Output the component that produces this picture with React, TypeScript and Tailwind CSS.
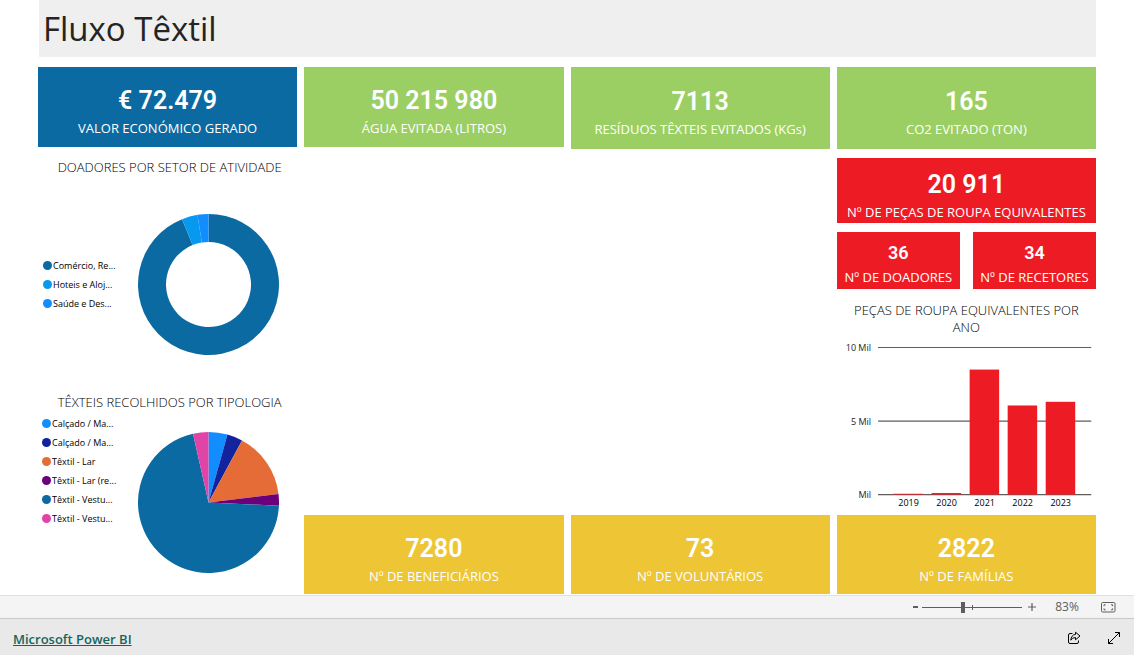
import { useState } from "react";

interface Slice {
  label: string;
  color: string;
  start: number;
  end: number;
}

interface StatCardProps {
  value: string;
  label: string;
  className: string;
  small?: boolean;
}

const FONT = "font-['Open_Sans','Noto_Sans',sans-serif]";

// Angles in degrees, clockwise from the top
const donors: Slice[] = [
  { label: "Comércio, Re...", color: "#0B6AA2", start: 0, end: 338 },
  { label: "Hoteis e Aloj...", color: "#0799F0", start: 338, end: 351 },
  { label: "Saúde e Des...", color: "#118DFF", start: 351, end: 360 },
];

const textiles: Slice[] = [
  { label: "Calçado / Ma...", color: "#118DFF", start: 0, end: 15.6 },
  { label: "Calçado / Ma...", color: "#12239E", start: 15.6, end: 28.4 },
  { label: "Têxtil - Lar", color: "#E66C37", start: 28.4, end: 83 },
  { label: "Têxtil - Lar (re...", color: "#6B007B", start: 83, end: 92.6 },
  { label: "Têxtil - Vestu...", color: "#0B6AA2", start: 92.6, end: 347.3 },
  { label: "Têxtil - Vestu...", color: "#E044A7", start: 347.3, end: 360 },
];

const years = [
  { year: "2019", pieces: 60 },
  { year: "2020", pieces: 110 },
  { year: "2021", pieces: 8500 },
  { year: "2022", pieces: 6060 },
  { year: "2023", pieces: 6310 },
];

function point(r: number, angle: number) {
  const a = (angle * Math.PI) / 180;
  return `${70.5 + r * Math.sin(a)} ${70.5 - r * Math.cos(a)}`;
}

function slicePath({ start, end }: Slice, inner: number) {
  const large = end - start > 180 ? 1 : 0;
  return `M${point(70.5, start)} A70.5 70.5 0 ${large} 1 ${point(70.5, end)} L${point(inner, end)} A${inner} ${inner} 0 ${large} 0 ${point(inner, start)} Z`;
}

function RoundChart({ title, slices, inner }: { title: string; slices: Slice[]; inner: number }) {
  return (
    <svg viewBox="0 0 141 141" className="size-[141px] shrink-0" role="img" aria-label={title}>
      {slices.map((slice) => (
        <path key={slice.start} d={slicePath(slice, inner)} fill={slice.color} />
      ))}
    </svg>
  );
}

function Legend({ slices }: { slices: Slice[] }) {
  return (
    <ul className="w-[95px] shrink-0">
      {slices.map((slice) => (
        <li key={slice.start} className="flex h-[19px] items-center gap-px whitespace-nowrap text-[9px] text-black">
          <span className="size-[9px] rounded-full" style={{ backgroundColor: slice.color }} />
          {slice.label}
        </li>
      ))}
    </ul>
  );
}

function StatCard({ value, label, className, small }: StatCardProps) {
  return (
    <div
      className={`flex flex-col items-center justify-center text-white ${small ? "gap-0.5 pt-1.5" : "gap-px pt-[9px]"} ${className}`}
    >
      <span
        className={`font-['Roboto',sans-serif] font-semibold ${small ? "text-[18px] leading-6" : "text-[25px] leading-8"}`}
      >
        {value}
      </span>
      <span className="whitespace-nowrap text-[13px] leading-5">{label}</span>
    </div>
  );
}

function YearChart() {
  return (
    <svg viewBox="0 0 259 174" className="mt-0.5 w-full" role="img" aria-label="Peças de roupa equivalentes por ano">
      {["10 Mil", "5 Mil", "Mil"].map((tick, i) => (
        <g key={tick}>
          <line x1="41" x2="254" y1={9.5 + i * 73.5} y2={9.5 + i * 73.5} stroke="#605E5C" strokeWidth="1.2" />
          <text x="34" y={13 + i * 73.5} textAnchor="end" fontSize="9" fill="#252423">
            {tick}
          </text>
        </g>
      ))}
      {years.map(({ year, pieces }, i) => {
        const height = pieces * 0.0147;
        return (
          <g key={year}>
            <rect x={56.5 + i * 38} y={156.5 - height} width="29.5" height={height} fill="#ED1C24" />
            <text x={71.5 + i * 38} y="168" textAnchor="middle" fontSize="9" fill="#000">
              {year}
            </text>
          </g>
        );
      })}
    </svg>
  );
}

export default function App() {
  const [zoom, setZoom] = useState(83);

  return (
    <div className={`flex min-h-screen flex-col bg-white ${FONT}`}>
      <main className="flex grow flex-col px-[38px]">
        <header className="ml-px flex h-[57px] items-center bg-[#EFEFEF] px-1">
          <h1 className="text-[33px] leading-10 text-[#252423]">Fluxo Têxtil</h1>
        </header>

        <div className="grid grow grid-cols-4 gap-[7px] pt-2.5 pb-px">
          {/* Donors and textile types */}
          <div className="flex flex-col">
            <StatCard value="€ 72.479" label="VALOR ECONÓMICO GERADO" className="h-20 bg-[#0B6AA2]" />
            <section>
              <h2 className="mt-2.5 pl-1 text-center text-[13px] leading-5 font-light text-black">
                DOADORES POR SETOR DE ATIVIDADE
              </h2>
              <div className="mt-[37px] flex items-center pl-[5px]">
                <Legend slices={donors} />
                <RoundChart title="Doadores por setor de atividade" slices={donors} inner={42.5} />
              </div>
            </section>
            <section>
              <h2 className="mt-[37px] pl-1 text-center text-[13px] leading-5 font-light text-black">
                TÊXTEIS RECOLHIDOS POR TIPOLOGIA
              </h2>
              <div className="mt-0.5 flex items-start pl-1">
                <Legend slices={textiles} />
                <div className="pt-[18px] pl-px">
                  <RoundChart title="Têxteis recolhidos por tipologia" slices={textiles} inner={0} />
                </div>
              </div>
            </section>
          </div>

          <div className="flex flex-col justify-between">
            <StatCard value="50 215 980" label="ÁGUA EVITADA (LITROS)" className="h-20 bg-[#9BCF63]" />
            <StatCard value="7280" label="Nº DE BENEFICIÁRIOS" className="h-[79px] bg-[#EDC535]" />
          </div>

          <div className="flex flex-col justify-between">
            <StatCard value="7113" label="RESÍDUOS TÊXTEIS EVITADOS (KGs)" className="h-[82px] bg-[#9BCF63]" />
            <StatCard value="73" label="Nº DE VOLUNTÁRIOS" className="h-[79px] bg-[#EDC535]" />
          </div>

          <div className="flex flex-col">
            <StatCard value="165" label="CO2 EVITADO (TON)" className="h-[82px] bg-[#9BCF63]" />
            <StatCard
              value="20 911"
              label="Nº DE PEÇAS DE ROUPA EQUIVALENTES"
              className="mt-[9px] h-[65px] bg-[#ED1C24]"
            />
            <div className="mt-[9px] grid grid-cols-2 gap-[13px]">
              <StatCard small value="36" label="Nº DE DOADORES" className="h-[57px] bg-[#ED1C24]" />
              <StatCard small value="34" label="Nº DE RECETORES" className="h-[57px] bg-[#ED1C24]" />
            </div>
            <section className="mt-[13px]">
              <h2 className="px-2 text-center text-[13px] leading-[17px] font-light text-black">
                PEÇAS DE ROUPA EQUIVALENTES POR ANO
              </h2>
              <YearChart />
            </section>
            <StatCard value="2822" label="Nº DE FAMÍLIAS" className="mt-auto h-[79px] bg-[#EDC535]" />
          </div>
        </div>
      </main>

      {/* Zoom bar */}
      <div className="flex h-6 items-center justify-end border-y border-t-[#E1E1E1] border-b-[#C8C8C8] bg-[#F4F4F4] pr-[18px] text-[#605E5C]">
        <button
          type="button"
          aria-label="Reduzir"
          onClick={() => setZoom(Math.max(10, zoom - 10))}
          className="flex h-5 w-3.5 items-center justify-center"
        >
          <svg viewBox="0 0 5 2" className="h-0.5 w-[5px]" fill="currentColor">
            <rect width="5" height="2" />
          </svg>
        </button>
        <div className="relative flex h-5 w-[100px] items-center">
          <span className="absolute top-[10px] left-0 h-px w-full bg-[#605E5C]" />
          <span className="absolute top-2 left-1/2 h-[5px] w-px bg-[#605E5C]" />
          <input
            type="range"
            aria-label="Zoom"
            min={10}
            max={190}
            value={zoom}
            onChange={(e) => setZoom(Number(e.target.value))}
            className="relative h-5 w-full appearance-none bg-transparent [&::-webkit-slider-thumb]:h-[11px] [&::-webkit-slider-thumb]:w-1 [&::-webkit-slider-thumb]:appearance-none [&::-webkit-slider-thumb]:bg-[#605E5C]"
          />
        </div>
        <button
          type="button"
          aria-label="Ampliar"
          onClick={() => setZoom(Math.min(190, zoom + 10))}
          className="flex h-5 w-5 items-center justify-center"
        >
          <svg viewBox="0 0 8 8" className="size-2" stroke="currentColor" strokeWidth="1.2">
            <path d="M0 4h8M4 0v8" />
          </svg>
        </button>
        <span className="w-[50px] text-center text-[12px] leading-5">{zoom}%</span>
        <button type="button" aria-label="Ajustar à página" className="ml-[9px]">
          <svg viewBox="0 0 15 11" className="h-[11px] w-[15px]" fill="none" stroke="currentColor">
            <rect x=".5" y=".5" width="13.5" height="9.5" rx="1.2" />
            <path d="M3 4.2V2.8h1.6M10 2.8h1.6v1.4M11.6 6.4v1.4H10M4.6 7.8H3V6.4" />
          </svg>
        </button>
      </div>

      <footer className="flex h-9 items-center justify-between bg-[#E9E9E9] px-[13px]">
        <a href="https://powerbi.microsoft.com" className="pt-1 text-[13px] leading-5 font-semibold text-[#14665C] underline">
          Microsoft Power BI
        </a>
        <div className="flex items-center gap-[26px] pt-0.5 text-black">
          <button type="button" aria-label="Partilhar">
            <svg viewBox="0 0 14 14" className="size-3.5" fill="none" stroke="currentColor" strokeLinejoin="round">
              <path d="M5.5 2.5H3A1.5 1.5 0 0 0 1.5 4v7A1.5 1.5 0 0 0 3 12.5h7a1.5 1.5 0 0 0 1.5-1.5V9.5" />
              <path d="M8.5 1.2 13 5 8.500 8.800V6.600C6.300 6.600 5 7.400 3.800 9.200 4 6 5.600 3.700 8.500 3.400Z" />
            </svg>
          </button>
          <button type="button" aria-label="Ecrã inteiro">
            <svg viewBox="0 0 14 14" className="size-3.5" fill="none" stroke="currentColor">
              <path d="M8 1.500h4.500V6M12.500 1.500l-11 11M1.500 8v4.500H6" />
            </svg>
          </button>
        </div>
      </footer>
    </div>
  );
}
